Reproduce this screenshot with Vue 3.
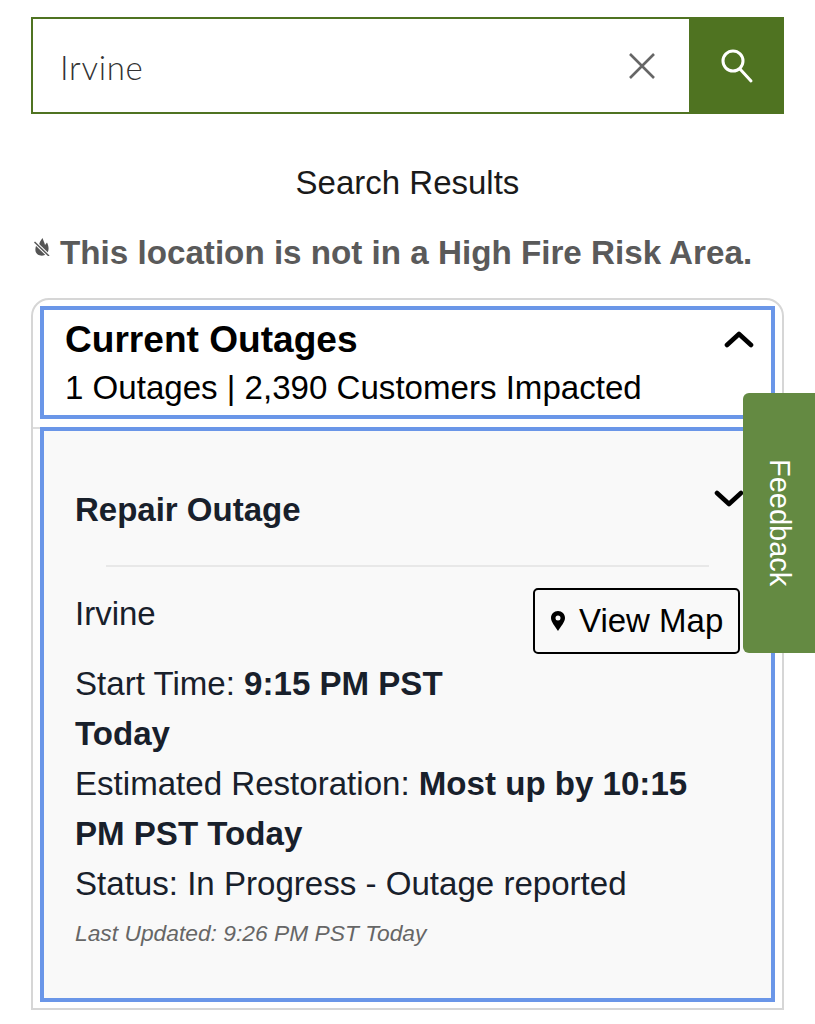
<template>
  <div class="page">
    <div class="search">
      <div class="search-input">
        <span class="search-value">Irvine</span>
        <svg class="clear-icon" viewBox="0 0 28 28" width="28" height="28" fill="none" stroke="#666" stroke-width="2.6">
          <path d="M2 2 L26 26 M26 2 L2 26" />
        </svg>
      </div>
      <button class="search-btn" type="button" aria-label="Search">
        <svg viewBox="0 0 34 36" width="34" height="36" fill="none" stroke="#fff" stroke-width="3" stroke-linecap="round">
          <circle cx="13" cy="13" r="10" />
          <path d="M20 21 L31 33" />
        </svg>
      </button>
    </div>

    <h2 class="results-title">Search Results</h2>

    <div class="fire-note">
      <svg class="fire-icon" viewBox="0 0 16 18" width="16" height="18" fill="#555">
        <path d="M8.5 0 C9.5 3 10.5 4.5 11 7 L13 4.5 C15 8.5 15.5 13.5 12 16.5 C9 18.5 4 18 2 14.5 C0.5 11.5 2 8 3 5 L5 7.5 C5 5 6.5 2.5 8.5 0 Z" />
        <path d="M0.5 4 L15 18" stroke="#fff" stroke-width="3.6" />
        <path d="M0.5 4 L15 18" stroke="#555" stroke-width="1.5" />
      </svg>
      <span>This location is not in a High Fire Risk Area.</span>
    </div>

    <div class="card">
      <div class="summary">
        <div class="summary-top">
          <h3>Current Outages</h3>
          <svg class="chevron up" viewBox="0 0 30 18" width="30" height="18" fill="none" stroke="#000" stroke-width="4.6" stroke-linecap="round" stroke-linejoin="round">
            <path d="M3 15 L15 4 L27 15" />
          </svg>
        </div>
        <p>1 Outages | 2,390 Customers Impacted</p>
      </div>

      <div class="rule"></div>

      <div class="detail">
        <div class="detail-head">
          <h4>Repair Outage</h4>
          <svg class="chevron down" viewBox="0 0 30 18" width="30" height="18" fill="none" stroke="#000" stroke-width="4.6" stroke-linecap="round" stroke-linejoin="round">
            <path d="M3 3 L15 14 L27 3" />
          </svg>
        </div>
        <div class="detail-rule"></div>

        <div class="place-row">
          <span class="place">Irvine</span>
          <button class="map-btn" type="button">
            <svg viewBox="0 0 14 20" width="14" height="20" fill="#000">
              <path fill-rule="evenodd" d="M7 0 C3 0 0 3 0 7 C0 11 4 15 7 20 C10 15 14 11 14 7 C14 3 11 0 7 0 Z M7 4.5 A2.5 2.5 0 1 1 7 9.5 A2.5 2.5 0 1 1 7 4.5 Z" />
            </svg>
            View Map
          </button>
        </div>

        <div class="lines">
          <p>Start Time: <b>9:15 PM PST</b></p>
          <p><b>Today</b></p>
          <p>Estimated Restoration: <b>Most up by 10:15</b></p>
          <p><b>PM PST Today</b></p>
          <p>Status: In Progress - Outage reported</p>
        </div>
        <p class="updated">Last Updated: 9:26 PM PST Today</p>
      </div>
    </div>

    <a class="feedback">Feedback</a>
  </div>
</template>

<script setup>
</script>

<style scoped>
.page {
  position: relative;
  width: 815px;
  height: 1024px;
  padding: 17px 31px 0;
  box-sizing: border-box;
  overflow: hidden;
  background: #fff;
  font-family: "Liberation Sans", Arial, sans-serif;
  color: #000;
}

.search {
  display: flex;
  height: 97px;
}

.search-input {
  flex: 1;
  display: flex;
  align-items: center;
  justify-content: space-between;
  padding: 0 33px 0 27px;
  border: 2px solid #4f7321;
  border-right: none;
}

.search-value {
  font-family: Lato, sans-serif;
  font-weight: 300;
  font-size: 33px;
  letter-spacing: 0.7px;
  color: #333;
  margin-top: 3px;
}

.search-btn {
  width: 95px;
  border: none;
  padding: 0;
  background: #4f7321;
  display: flex;
  align-items: center;
  justify-content: center;
}

.results-title {
  margin: 50px 0 0;
  font-size: 33px;
  line-height: 38px;
  font-weight: 400;
  text-align: center;
  color: #1a1a1a;
}

.fire-note {
  display: flex;
  align-items: flex-start;
  gap: 10px;
  margin-top: 31px;
  padding-left: 3px;
  font-size: 33.2px;
  line-height: 40px;
  font-weight: 700;
  color: #5a5a5a;
  white-space: nowrap;
}

.fire-icon {
  margin-top: 5px;
  flex: none;
}

.card {
  margin-top: 25px;
  height: 712px;
  box-sizing: border-box;
  padding: 6px 7px;
  border: 2px solid #d6d6d6;
  border-radius: 18px 18px 0 0;
}

.summary {
  height: 113px;
  box-sizing: border-box;
  padding: 7px 21px 0;
  border: 4px solid #6a96e8;
}

.summary-top {
  display: flex;
  justify-content: space-between;
  align-items: center;
}

h3 {
  margin: 0;
  font-size: 37.1px;
  line-height: 44px;
  font-weight: 700;
}

.chevron.up {
  margin-right: -4px;
}

.summary p {
  margin: 7px 0 0;
  font-size: 33.1px;
  line-height: 40px;
}

.rule {
  height: 2px;
  margin: 8px -7px 0;
  background: #ddd;
}

.detail {
  margin-top: -2px;
  height: 575px;
  box-sizing: border-box;
  padding: 0 33px 0 31px;
  border: 4px solid #6a96e8;
  background: #f9f9f9;
  color: #18202b;
}

.detail-head {
  display: flex;
  justify-content: space-between;
  align-items: flex-start;
  height: 134px;
  padding-top: 59px;
  box-sizing: border-box;
  margin-right: -6px;
}

h4 {
  margin: 0;
  font-size: 33px;
  line-height: 40px;
  font-weight: 700;
}

.detail-rule {
  height: 2px;
  margin: 0 29px 0 31px;
  background: #e8e8e8;
}

.place-row {
  display: flex;
  justify-content: space-between;
  align-items: flex-start;
  margin-right: -2px;
  padding-top: 21px;
}

.place {
  margin-top: 1px;
  font-size: 33px;
  line-height: 50px;
}

.map-btn {
  width: 207px;
  height: 66px;
  box-sizing: border-box;
  display: flex;
  align-items: center;
  gap: 14px;
  padding: 0 0 0 16px;
  border: 2px solid #000;
  border-radius: 5px;
  background: transparent;
  font-family: inherit;
  font-size: 33px;
  color: #000;
}

.lines {
  margin-top: 5px;
}

.lines p {
  margin: 0;
  font-size: 33.1px;
  line-height: 50px;
  white-space: nowrap;
}

.updated {
  margin: 9px 0 0;
  font-size: 22.8px;
  line-height: 30px;
  font-style: italic;
  color: #666;
}

.feedback {
  position: absolute;
  left: 743px;
  top: 393px;
  width: 72px;
  height: 260px;
  display: flex;
  align-items: center;
  justify-content: center;
  writing-mode: vertical-rl;
  border-radius: 6px 0 0 6px;
  background: #648a42;
  color: #fff;
  font-size: 29px;
}
</style>
